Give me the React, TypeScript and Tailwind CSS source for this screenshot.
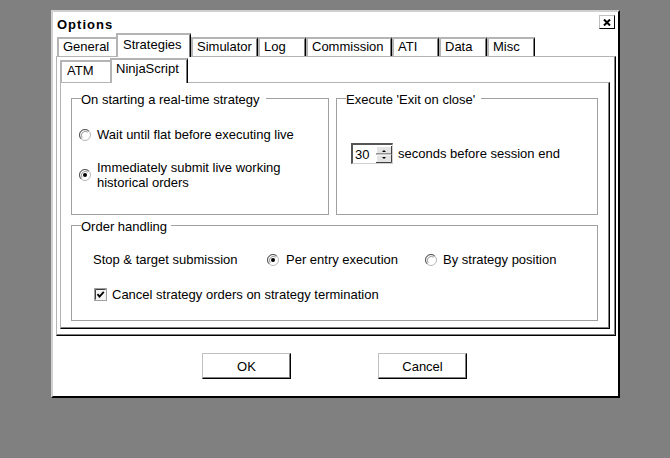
import React from 'react';

type TabProps = {
  label: string;
  className: string;
  selected?: boolean;
  hideRight?: boolean;
};

// Zakładki głównego paska (General, Strategies, ...)
const MainTab: React.FC<TabProps> = ({ label, className, selected = false, hideRight = false }) => {
  if (selected) {
    return (
      <div
        className={`relative z-10 -mb-px h-[24px] shrink-0 border-t-2 border-l-2 border-r border-[#b4b4b4] border-r-black bg-white pl-[5px] pt-[2px] shadow-[inset_-1px_0_0_#808080] ${className}`}
      >
        {label}
      </div>
    );
  }
  return (
    <div
      className={`h-[19px] shrink-0 border-t-2 border-l-2 border-[#b4b4b4] bg-white pl-[4px] ${
        hideRight ? '' : 'border-r border-r-black shadow-[inset_-1px_0_0_#808080]'
      } ${className}`}
    >
      {label}
    </div>
  );
};

// Zakładki drugiego poziomu (ATM, NinjaScript)
const SubTab: React.FC<TabProps> = ({ label, className, selected = false }) => {
  if (selected) {
    return (
      <div
        className={`relative z-10 -mb-px h-[25px] shrink-0 border-t-2 border-l-2 border-r border-[#b4b4b4] border-r-black bg-white pl-[4px] pt-[1px] shadow-[inset_-1px_0_0_#808080] ${className}`}
      >
        {label}
      </div>
    );
  }
  return (
    <div className={`h-[22px] shrink-0 border-t-2 border-l-2 border-[#b4b4b4] bg-white pl-[5px] pt-[1px] ${className}`}>
      {label}
    </div>
  );
};

const Radio: React.FC<{ checked?: boolean }> = ({ checked = false }) => (
  <svg width="12" height="12" viewBox="0 0 12 12" className="shrink-0">
    <circle cx="6" cy="6" r="5.5" fill="#fff" stroke="#b8b8b8" />
    <path d="M2.1 9.9 A5.5 5.5 0 0 1 9.9 2.1" fill="none" stroke="#555" />
    <path d="M3.2 8.8 A4 4 0 0 1 8.8 3.2" fill="none" stroke="#9a9a9a" />
    {checked && <circle cx="6" cy="6" r="2" fill="#000" />}
  </svg>
);

const Checkbox: React.FC<{ checked?: boolean }> = ({ checked = false }) => (
  <svg width="13" height="13" viewBox="0 0 13 13" className="shrink-0">
    <rect x="0.5" y="0.5" width="12" height="12" fill="#f4f4f4" stroke="#a0a0a0" />
    <path d="M1.5 11.5 V1.5 H11.5" fill="none" stroke="#404040" />
    {checked && <path d="M3.5 6.2 L5.5 8.6 L9.8 3.8" fill="none" stroke="#000" strokeWidth="1.8" />}
  </svg>
);

const Spinner: React.FC = () => (
  <svg width="16" height="17" viewBox="0 0 16 17" className="shrink-0">
    <rect x="0" y="0" width="16" height="8.5" fill="#e4e4e4" />
    <rect x="0" y="8.5" width="16" height="8.5" fill="#e4e4e4" />
    <path d="M0.5 8 V0.5 H15" fill="none" stroke="#fff" />
    <path d="M15.5 0 V8 H0" fill="none" stroke="#404040" />
    <path d="M0.5 16.5 V9 H15" fill="none" stroke="#fff" />
    <path d="M15.5 8.5 V16.5 H0" fill="none" stroke="#404040" />
    <polygon points="6,6 10,6 8,4" fill="#000" />
    <polygon points="6,11 10,11 8,13" fill="#000" />
  </svg>
);

const App: React.FC = () => {
  return (
    <div className="h-[458px] w-[670px] overflow-hidden bg-[#808080] pl-[51px] pt-[10px] font-['Liberation_Sans',Arial,sans-serif] text-[13px] leading-[15px] text-black">
      <div className="flex h-[388px] w-[569px] flex-col border-2 border-[#d0d0d0] border-r-black border-b-black bg-white">
        {/* Pasek tytułu */}
        <div className="flex h-[21px] shrink-0 justify-between pl-[4px] pr-[3px]">
          <div className="pt-[5px] font-bold tracking-[1px]">Options</div>
          <div className="mt-[3px] flex h-[14px] w-[16px] items-center justify-center border border-[#c0c0c0] border-r-black border-b-black">
            <svg width="8" height="7" viewBox="0 0 8 7">
              <path d="M1 0.5 L7 6.5 M7 0.5 L1 6.5" stroke="#000" strokeWidth="2" />
            </svg>
          </div>
        </div>

        {/* Główne zakładki */}
        <div className="flex h-[23px] shrink-0 items-end pl-[4px]">
          <MainTab label="General" className="w-[59px]" hideRight />
          <MainTab label="Strategies" className="w-[75px]" selected />
          <MainTab label="Simulator" className="w-[67px]" />
          <MainTab label="Log" className="w-[48px]" />
          <MainTab label="Commission" className="w-[86px]" />
          <MainTab label="ATI" className="w-[47px]" />
          <MainTab label="Data" className="w-[48px]" />
          <MainTab label="Misc" className="w-[48px]" />
        </div>

        {/* Panel zakładki Strategies */}
        <div className="ml-[3px] flex h-[280px] w-[560px] shrink-0 flex-col border border-[#b4b4b4] border-r-black border-b-black pl-[3px] pt-[1px] shadow-[inset_-1px_-1px_0_#808080]">
          <div className="flex h-[24px] shrink-0 items-end">
            <SubTab label="ATM" className="w-[50px]" />
            <SubTab label="NinjaScript" className="w-[78px]" selected />
          </div>

          <div className="h-[247px] w-[550px] shrink-0 border border-[#b4b4b4] border-r-black border-b-black pl-[10px] pr-[11px] pt-[6px] shadow-[inset_-1px_-1px_0_#808080]">
            <div className="grid grid-cols-[258px_262px] gap-x-[7px] gap-y-px">
              <fieldset className="h-[126px] border border-[#a0a0a0]">
                <legend className="ml-[9px] pr-[7px] pt-[4px] leading-[14px]">On starting a real-time strategy</legend>
                <div className="flex flex-col pl-[7px]">
                  <div className="mt-[20px] flex items-center gap-[6px]">
                    <Radio />
                    <span>Wait until flat before executing live</span>
                  </div>
                  <div className="mt-[18px] flex items-center gap-[6px]">
                    <Radio checked />
                    <span>
                      Immediately submit live working
                      <br />
                      historical orders
                    </span>
                  </div>
                </div>
              </fieldset>

              <fieldset className="h-[126px] border border-[#a0a0a0]">
                <legend className="ml-[9px] pr-[6px] pt-[4px] leading-[14px]">Execute 'Exit on close'</legend>
                <div className="mt-[36px] flex items-center gap-[5px] pl-[14px]">
                  <div className="flex h-[21px] w-[42px] items-center border-t-2 border-l-2 border-r border-b border-t-[#555] border-l-[#555] border-r-[#d0d0d0] border-b-[#d0d0d0] bg-white">
                    <span className="pl-[2px]">30</span>
                    <div className="ml-auto">
                      <Spinner />
                    </div>
                  </div>
                  <span>seconds before session end</span>
                </div>
              </fieldset>

              <fieldset className="col-span-2 h-[105px] border border-[#a0a0a0]">
                <legend className="ml-[9px] pr-[4px] pt-[4px] leading-[14px]">Order handling</legend>
                <div className="mt-[18px] flex items-center pl-[21px]">
                  <span className="w-[174px] shrink-0">Stop &amp; target submission</span>
                  <div className="flex w-[158px] shrink-0 items-center gap-[7px]">
                    <Radio checked />
                    <span>Per entry execution</span>
                  </div>
                  <div className="flex items-center gap-[6px]">
                    <Radio />
                    <span>By strategy position</span>
                  </div>
                </div>
                <div className="mt-[20px] flex items-center gap-[5px] pl-[22px]">
                  <Checkbox checked />
                  <span>Cancel strategy orders on strategy termination</span>
                </div>
              </fieldset>
            </div>
          </div>
        </div>

        {/* Przyciski */}
        <div className="mt-[17px] flex justify-center gap-[87px] pr-[2px]">
          <button className="h-[26px] w-[89px] border border-[#c0c0c0] border-r-black border-b-black bg-white shadow-[inset_-1px_-1px_0_#808080]">
            OK
          </button>
          <button className="h-[26px] w-[89px] border border-[#c0c0c0] border-r-black border-b-black bg-white shadow-[inset_-1px_-1px_0_#808080]">
            Cancel
          </button>
        </div>
      </div>
    </div>
  );
};

export default App;
